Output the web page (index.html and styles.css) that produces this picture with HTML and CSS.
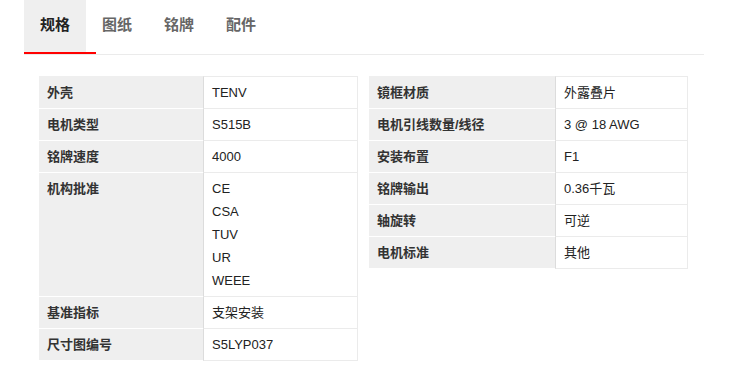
FILE: index.html
```html
<!DOCTYPE html>
<html lang="zh">
<head>
<meta charset="utf-8">
<link rel="stylesheet" href="styles.css">
</head>
<body>
<div class="page">
  <nav class="tabs">
    <a class="tab active">规格</a>
    <a class="tab">图纸</a>
    <a class="tab">铭牌</a>
    <a class="tab">配件</a>
  </nav>
  <div class="specs">
    <div class="spec spec-left">
      <div class="k first">外壳</div><div class="v first">TENV</div>
      <div class="k">电机类型</div><div class="v">S515B</div>
      <div class="k">铭牌速度</div><div class="v">4000</div>
      <div class="k">机构批准</div><div class="v"><div>CE</div><div>CSA</div><div>TUV</div><div>UR</div><div>WEEE</div></div>
      <div class="k">基准指标</div><div class="v">支架安装</div>
      <div class="k">尺寸图编号</div><div class="v">S5LYP037</div>
    </div>
    <div class="spec spec-right">
      <div class="k first">镜框材质</div><div class="v first">外露叠片</div>
      <div class="k">电机引线数量/线径</div><div class="v">3 @ 18 AWG</div>
      <div class="k">安装布置</div><div class="v">F1</div>
      <div class="k">铭牌输出</div><div class="v">0.36千瓦</div>
      <div class="k">轴旋转</div><div class="v">可逆</div>
      <div class="k">电机标准</div><div class="v">其他</div>
    </div>
  </div>
</div>
</body>
</html>
```
FILE: styles.css
```css
html, body {
  margin: 0;
  padding: 0;
  background: #fff;
}
body {
  font-family: "Liberation Sans", Arial, "Noto Sans CJK SC", sans-serif;
  color: #222;
}
.page {
  width: 680px;
  margin-left: 24px;
}
.tabs {
  display: flex;
  border-bottom: 1px solid #ebebeb;
  height: 54px;
}
.tab {
  position: relative;
  display: block;
  height: 52px;
  padding: 0 16px;
  line-height: 49px;
  font-size: 15px;
  font-weight: bold;
  color: #666;
}
.tab.active {
  background: #efefef;
  color: #222;
}
.tab.active::after {
  content: "";
  position: absolute;
  left: 0;
  top: 52px;
  width: 72px;
  height: 2px;
  background: #ff0000;
}
.specs {
  display: grid;
  grid-template-columns: 319px 319px;
  column-gap: 11px;
  align-items: start;
  padding: 21px 15px 0;
}
.spec {
  display: grid;
  font-size: 13px;
}
.spec-left { grid-template-columns: 164px 1fr; }
.spec-right { grid-template-columns: 186px 1fr; }
.k, .v {
  padding: 4px 8px;
  line-height: 23px;
}
.k {
  background: #efefef;
  border-bottom: 1px solid #fff;
  font-weight: bold;
  color: #333;
}
.v {
  border-left: 1px solid #dcdcdc;
  border-right: 1px solid #ebebeb;
  border-bottom: 1px solid #ebebeb;
  color: #222;
}
.k.first { border-top: 1px solid #efefef; }
.v.first { border-top: 1px solid #ebebeb; }
```
